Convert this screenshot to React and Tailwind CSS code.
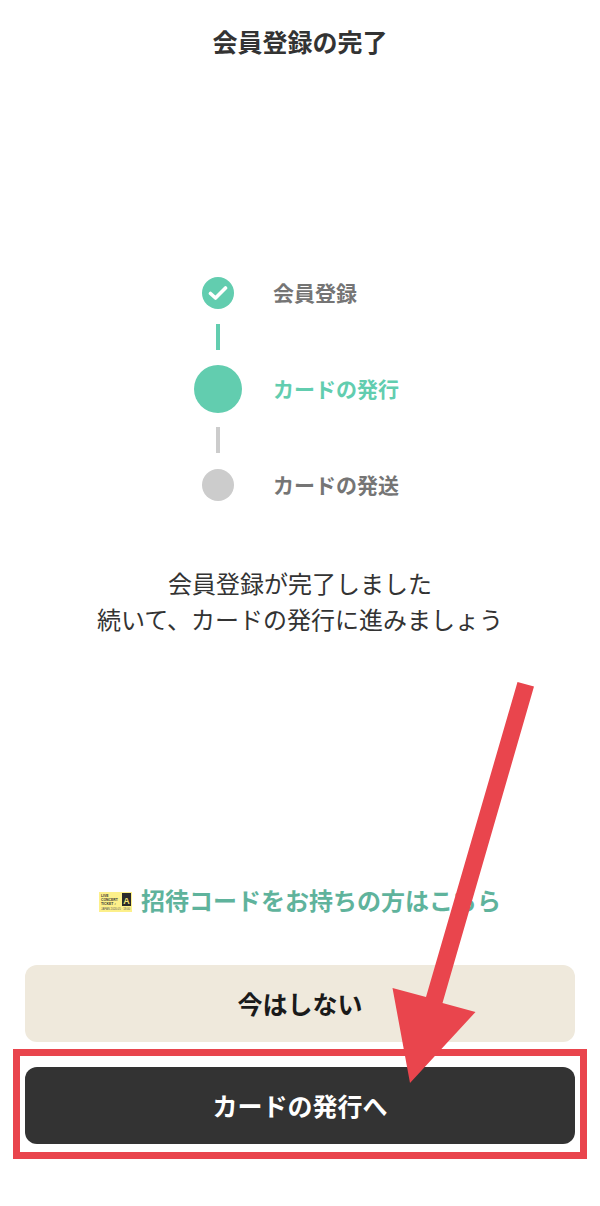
function Step({ label, active, children }) {
  return (
    <div className="flex items-center h-12">
      <div className="w-12 flex justify-center">{children}</div>
      <span className={`ml-[31px] text-[21px] font-bold ${active ? 'text-[#62cdaf]' : 'text-[#757575]'}`}>{label}</span>
    </div>
  );
}

function Ticket() {
  return (
    <svg width="33" height="20" viewBox="0 0 33 20" className="shrink-0 mt-1" fontFamily="Liberation Sans, sans-serif">
      <rect width="33" height="20" fill="#fdf08a" />
      <rect x="23" y="1" width="9" height="13" fill="#2a2a2a" />
      <text x="27.500" y="12" fontSize="9" fontWeight="700" textAnchor="middle" fill="#f5e675">A</text>
      <g fontSize="3.400" fontWeight="700" fill="#333333">
        <text x="2" y="5">LIVE</text>
        <text x="2" y="9">CONCERT</text>
        <text x="2" y="13">TICKET ♪</text>
      </g>
      <text x="2" y="18" fontSize="2.800" fill="#555555">JAPAN 2020.05 · 18:00</text>
    </svg>
  );
}

export default function App() {
  return (
    <div className="relative w-[600px] h-[1206px] bg-white overflow-hidden flex flex-col items-center font-['Noto_Sans_CJK_JP','Noto_Sans',sans-serif]">
      <h1 className="mt-[23px] h-9 leading-9 text-[25px] font-bold text-[#333333]">会員登録の完了</h1>

      {/* stepper */}
      <div className="mt-[210px] w-[600px] pl-[194px] flex flex-col">
        <Step label="会員登録">
          <div className="w-8 h-8 rounded-full bg-[#62cdaf] flex items-center justify-center">
            <svg width="20" height="16" viewBox="0 0 20 16" fill="none">
              <path d="M2.500 8.500 L7.500 13 L17.500 3" stroke="white" strokeWidth="3.600" strokeLinecap="round" strokeLinejoin="round" />
            </svg>
          </div>
        </Step>
        <div className="w-12 flex justify-center mt-[7px] mb-[15px]"><div className="w-1 h-[26px] bg-[#62cdaf]" /></div>
        <Step label="カードの発行" active>
          <div className="w-12 h-12 rounded-full bg-[#62cdaf]" />
        </Step>
        <div className="w-12 flex justify-center mt-[14px] mb-2"><div className="w-1 h-[26px] bg-[#cccccc]" /></div>
        <Step label="カードの発送">
          <div className="w-8 h-8 rounded-full bg-[#cccccc]" />
        </Step>
      </div>

      <p className="mt-14 text-2xl leading-9 text-center text-[#333333]">
        会員登録が完了しました<br />続いて、カードの発行に進みましょう
      </p>

      <div className="mt-[245px] flex items-center gap-[9px]">
        <Ticket />
        <span className="text-2xl font-bold leading-9 text-[#5fb39c]">招待コードをお持ちの方はこちら</span>
      </div>

      <div className="mt-[47px] w-[550px] flex flex-col gap-[25px]">
        <button className="h-[77px] rounded-xl bg-[#efe9dc] text-[25px] font-bold text-[#1a1a1a]">今はしない</button>
        <button className="h-[77px] rounded-xl bg-[#333333] text-[25px] font-bold text-white">カードの発行へ</button>
      </div>

      {/* annotation overlay */}
      <div className="absolute left-[13px] top-[1049px] w-[574px] h-[110px] border-[7px] border-[#e9454d]" />
      <svg className="absolute left-0 top-0" width="600" height="1206" viewBox="0 0 600 1206">
        <path d="M517.500 682 L534 686.500 L442.500 1003 L475.500 1012 L410 1083 L392.500 988 L426 997 Z" fill="#e9454d" />
      </svg>
    </div>
  );
}
